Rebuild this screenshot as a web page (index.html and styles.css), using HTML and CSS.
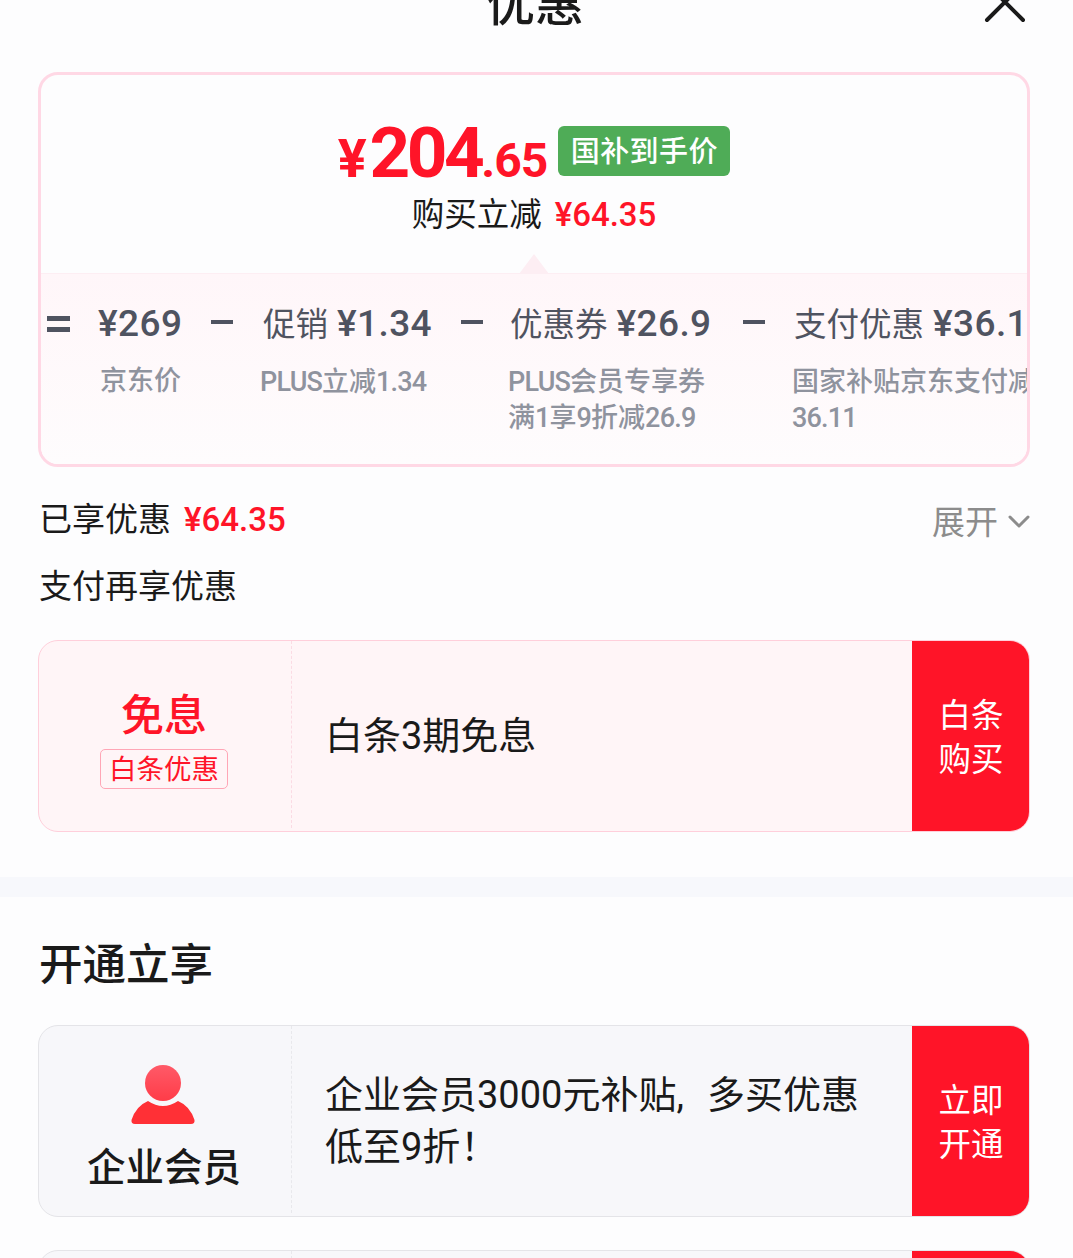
FILE: index.html
```html
<!DOCTYPE html>
<html lang="zh-CN">
<head>
    <meta charset="UTF-8">
    <title>优惠</title>
    <link rel="stylesheet" href="styles.css">
</head>
<body>

<div class="page">
    <div class="header">
        <h1 class="title">优惠</h1>
        <svg class="close" width="44" height="44" viewBox="0 0 44 44">
            <path d="M4 4 L40 40 M40 4 L4 40" stroke="#1a1a1a" stroke-width="4" stroke-linecap="round" fill="none"/>
        </svg>
    </div>

    <div class="section">
        <div class="price-card">
            <div class="price-top">
                <div class="price-line">
                    <span class="price"><span class="yen">¥</span><span class="big">204</span><span class="small">.65</span></span>
                    <span class="tag">国补到手价</span>
                </div>
                <div class="cut-line">购买立减<span class="red-num">¥64.35</span></div>
            </div>
            <div class="price-bottom">
                <div class="arrow"></div>
                <div class="formula">
                    <span class="op-eq"></span>
                    <div class="item item-1"><div class="item-main">¥269</div><div class="item-sub item-sub-c">京东价</div></div>
                    <span class="op op-1"></span>
                    <div class="item item-2"><div class="item-main"><span class="label">促销</span>¥1.34</div><div class="item-sub"><span class="tight">PLUS</span>立减<span class="tight">1.34</span></div></div>
                    <span class="op op-2"></span>
                    <div class="item item-3"><div class="item-main"><span class="label">优惠券</span>¥26.9</div><div class="item-sub"><span class="tight">PLUS</span>会员专享券<br>满<span class="tight">1</span>享<span class="tight">9</span>折减<span class="tight">26.9</span></div></div>
                    <span class="op op-3"></span>
                    <div class="item item-4"><div class="item-main"><span class="label">支付优惠</span>¥36.11</div><div class="item-sub">国家补贴京东支付减<br><span class="tight">36.11</span></div></div>
                </div>
            </div>
        </div>

        <div class="row-line">
            <div class="row-left">已享优惠<span class="red-num">¥64.35</span></div>
            <div class="expand">展开
                <svg width="22" height="14" viewBox="0 0 22 14"><path d="M2 2 L11 11 L20 2" stroke="#8c8c8c" stroke-width="3" fill="none" stroke-linecap="round" stroke-linejoin="round"/></svg>
            </div>
        </div>
        <div class="pay-title">支付再享优惠</div>

        <div class="coupon coupon-pink">
            <div class="coupon-left">
                <div class="free">免息</div>
                <div class="free-tag">白条优惠</div>
            </div>
            <div class="coupon-text">白条3期免息</div>
            <div class="coupon-btn">白条<br>购买</div>
        </div>
    </div>

    <div class="divider"></div>

    <div class="section">
        <h2 class="open-title">开通立享</h2>
        <div class="coupon coupon-grey">
            <div class="coupon-left">
                <svg class="member-icon" width="66" height="62" viewBox="0 0 66 62">
                    <defs>
                        <linearGradient id="headFill" x1="0" y1="0" x2="0" y2="1">
                            <stop offset="0" stop-color="#ff5a68"/>
                            <stop offset="1" stop-color="#ff3c48"/>
                        </linearGradient>
                    </defs>
                    <circle cx="33" cy="19" r="18" fill="url(#headFill)"/>
                    <path d="M18 37 Q33 47 48 37 Q60 42 64.500 56 Q65 60 61 60 L5 60 Q1 60 1.500 56 Q6 42 18 37 Z" fill="#ff3036"/>
                </svg>
                <div class="member-name">企业会员</div>
            </div>
            <div class="coupon-text coupon-text-multi">企业会员3000元补贴<span class="comma">,</span>多买优惠<br>低至9折！</div>
            <div class="coupon-btn">立即<br>开通</div>
        </div>
        <div class="coupon coupon-grey coupon-next">
            <div class="coupon-left"></div>
            <div class="coupon-text"></div>
            <div class="coupon-btn"></div>
        </div>
    </div>
</div>

</body>
</html>
```

FILE: styles.css
```css
html, body {
    margin: 0;
    padding: 0;
    height: 1258px;
    overflow: hidden;
    background-color: #fdfdfe;
}
body {
    font-family: Roboto, "Noto Sans CJK SC", sans-serif;
    color: #1a1a1a;
}
.page {
    width: 1073px;
    margin-top: -30px;
}
.header {
    height: 102px;
    position: relative;
    text-align: center;
}
.title {
    margin: 0;
    padding-right: 3px;
    font-size: 49px;
    line-height: 70px;
    font-weight: 500;
}
.close {
    position: absolute;
    left: 983px;
    top: 10px;
}
.section {
    padding: 0 43px 0 38px;
}
.price-card {
    height: 395px;
    box-sizing: border-box;
    border: 3px solid #ffd8e5;
    border-radius: 20px;
    overflow: hidden;
    display: flex;
    flex-direction: column;
}
.price-top {
    height: 198px;
    flex-shrink: 0;
    box-sizing: border-box;
    padding-top: 48px;
    text-align: center;
}
.price-line {
    display: flex;
    justify-content: center;
    height: 62px;
}
.price {
    color: #ff1428;
    font-weight: 700;
    line-height: 62px;
    margin-top: -1px;
}
.yen { font-size: 54px; margin-right: 3px; }
.big { font-size: 71px; letter-spacing: -3.5px; }
.small { font-size: 48px; letter-spacing: -1px; }
.tag {
    margin-left: 11px;
    margin-top: 3px;
    width: 172px;
    height: 50px;
    background-color: #4fac57;
    border-radius: 6px;
    color: #fff;
    font-size: 29px;
    font-weight: 500;
    line-height: 52px;
    letter-spacing: 0.4px;
}
.cut-line {
    margin-top: 8px;
    font-size: 32.500px;
    line-height: 44px;
}
.red-num {
    color: #ff1428;
    font-weight: 500;
    margin-left: 13px;
    font-size: 33px;
}
.price-bottom {
    flex: 1;
    position: relative;
    border-top: 1px solid #fdeef3;
    background: linear-gradient(#fff6f9, #fefcfd);
}
.arrow {
    position: absolute;
    left: 478px;
    top: -20px;
    width: 0;
    height: 0;
    border-left: 15px solid transparent;
    border-right: 15px solid transparent;
    border-bottom: 20px solid #fdeef3;
}
.formula {
    display: flex;
    align-items: flex-start;
    white-space: nowrap;
    padding-top: 27px;
}
.op {
    flex-shrink: 0;
    height: 4px;
    background-color: #4f5360;
    margin-top: 19px;
    width: 22px;
}
.op-eq {
    flex-shrink: 0;
    box-sizing: border-box;
    margin-left: 6px;
    margin-top: 15px;
    width: 23px;
    height: 16px;
    border-top: 5px solid #4f5360;
    border-bottom: 5px solid #4f5360;
}
.item { flex-shrink: 0; }
.item-main {
    font-size: 37px;
    line-height: 46px;
    font-weight: 500;
    color: #4f5360;
    letter-spacing: 0.4px;
}
.label {
    font-size: 32.500px;
    font-weight: 400;
    margin-right: 9px;
    letter-spacing: 0;
}
.item-sub {
    margin-top: 16px;
    margin-left: -1px;
    font-size: 27px;
    line-height: 36px;
    font-weight: 500;
    color: #8f939e;
}
.tight { letter-spacing: -0.8px; }
.item-sub-c { padding-left: 3px; }
.item-1 { margin-left: 28px; width: 84px; }
.op-1 { margin-left: 29px; }
.item-2 { margin-left: 28px; width: 170px; }
.item-2 .item-main { padding-left: 2px; }
.op-2 { margin-left: 30px; }
.item-3 { margin-left: 26px; width: 205px; }
.item-3 .item-main { padding-left: 1px; }
.op-3 { margin-left: 29px; }
.item-4 { margin-left: 28px; }
.item-4 .item-main { padding-left: 1px; }
.row-line {
    display: flex;
    justify-content: space-between;
    align-items: center;
    margin-top: 31px;
    padding-left: 1px;
    height: 44px;
    font-size: 33px;
}
.row-left { line-height: 44px; }
.expand {
    display: flex;
    align-items: center;
    color: #8c8c8c;
}
.expand svg { margin-left: 10px; margin-top: 4px; }
.pay-title {
    margin-top: 23px;
    padding-left: 1px;
    font-size: 33px;
    line-height: 44px;
}
.coupon {
    height: 192px;
    box-sizing: border-box;
    display: flex;
    border-radius: 20px;
    border: 1px solid;
    overflow: hidden;
}
.coupon-pink {
    margin-top: 31px;
    background-color: #fff5f7;
    border-color: #ffcfdb;
}
.coupon-grey {
    background-color: #f7f7fa;
    border-color: #e4e4e8;
}
.coupon-left {
    width: 250px;
    padding-right: 2px;
    flex-shrink: 0;
    margin-bottom: 3px;
    display: flex;
    flex-direction: column;
    align-items: center;
    justify-content: center;
    border-right: 1px dashed #fbdbe4;
}
.coupon-grey .coupon-left { border-right-color: #e8e8ec; }
.free {
    color: #ff1428;
    font-size: 43px;
    line-height: 56px;
    font-weight: 500;
    margin-top: 8px;
}
.free-tag {
    margin-top: 5px;
    width: 128px;
    height: 40px;
    box-sizing: border-box;
    border: 1px solid #ffa6b6;
    border-radius: 5px;
    color: #ff1428;
    font-size: 27.500px;
    line-height: 39px;
    text-align: center;
}
.member-icon { margin-top: 18px; margin-left: -2px; }
.member-name {
    margin-top: 16px;
    font-size: 38.500px;
    line-height: 52px;
    font-weight: 500;
}
.coupon-text {
    flex: 1;
    padding-left: 33px;
    font-size: 38px;
    line-height: 52px;
    align-self: center;
}
.comma { margin-right: 23px; }
.coupon-btn {
    width: 118px;
    flex-shrink: 0;
    margin: -1px -1px -1px 0;
    padding-top: 4px;
    background-color: #ff1428;
    color: #fff;
    font-size: 32.500px;
    line-height: 44px;
    display: flex;
    align-items: center;
    justify-content: center;
    text-align: center;
}
.divider {
    height: 20px;
    margin-top: 45px;
    background-color: #f7f8fc;
}
.open-title {
    margin: 41px 0 31px;
    padding-left: 1px;
    font-size: 43.500px;
    line-height: 56px;
    font-weight: 500;
}
.coupon-next { margin-top: 33px; }
```
